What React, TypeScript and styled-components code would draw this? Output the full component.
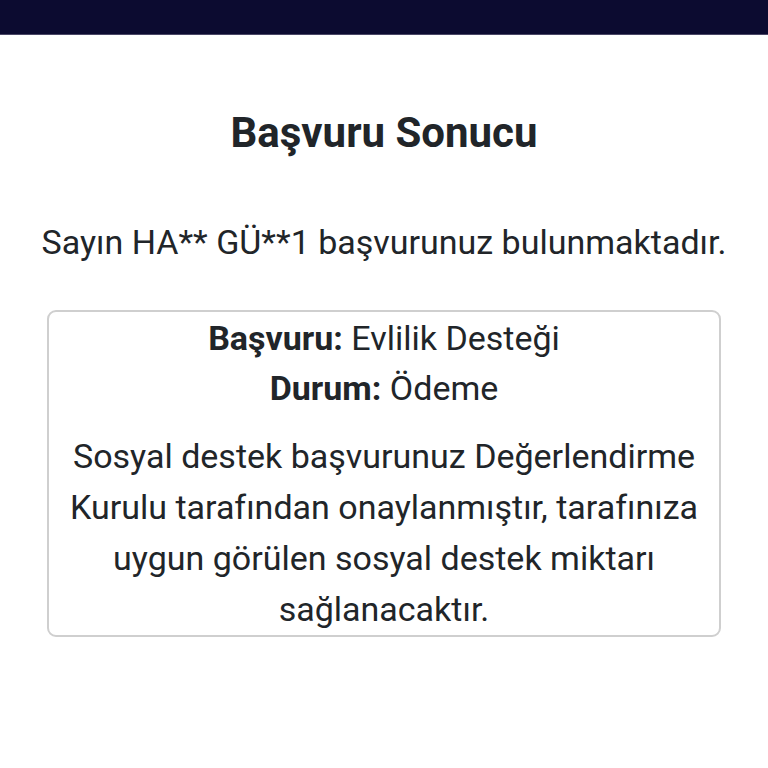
import React from "react";
import styled, { createGlobalStyle } from "styled-components";

const Global = createGlobalStyle`
  html, body { margin: 0; padding: 0; background: #ffffff; }
  body { font-family: Roboto, "Noto Sans", sans-serif; color: #212529; }
`;

const TopBar = styled.div`
  height: 34px;
  background: #0c0b30;
  border-bottom: 1px solid #4a4766;
`;

const Main = styled.main`
  display: flex;
  flex-direction: column;
  align-items: center;
  padding: 0 40px;
`;

const Title = styled.h1`
  margin: 73px 0 0;
  font-size: 42px;
  font-weight: 700;
  line-height: 50px;
  color: #212529;
`;

const Lead = styled.p`
  margin: 64px -12px 0;
  font-size: 34px;
  line-height: 40px;
  white-space: nowrap;
  color: #212529;
`;

const Card = styled.section`
  box-sizing: border-box;
  width: 674px;
  margin-top: 48px;
  border: 2px solid #cfcfcf;
  border-radius: 9px;
  padding: 1px 12px 0;
  text-align: center;
  font-size: 34px;
  color: #212529;
`;

const Row = styled.div`
  line-height: 50px;
`;

const Strong = styled.b`
  font-weight: 700;
`;

const Message = styled.p`
  margin: 18px 0 0;
  line-height: 51px;
`;

export default function App() {
  return (
    <>
      <Global />
      <TopBar />
      <Main>
        <Title>Başvuru Sonucu</Title>
        <Lead>Sayın HA** GÜ**1 başvurunuz bulunmaktadır.</Lead>
        <Card>
          <Row>
            <Strong>Başvuru:</Strong> Evlilik Desteği
          </Row>
          <Row>
            <Strong>Durum:</Strong> Ödeme
          </Row>
          <Message>
            Sosyal destek başvurunuz Değerlendirme Kurulu tarafından
            onaylanmıştır, tarafınıza uygun görülen sosyal destek miktarı
            sağlanacaktır.
          </Message>
        </Card>
      </Main>
    </>
  );
}
